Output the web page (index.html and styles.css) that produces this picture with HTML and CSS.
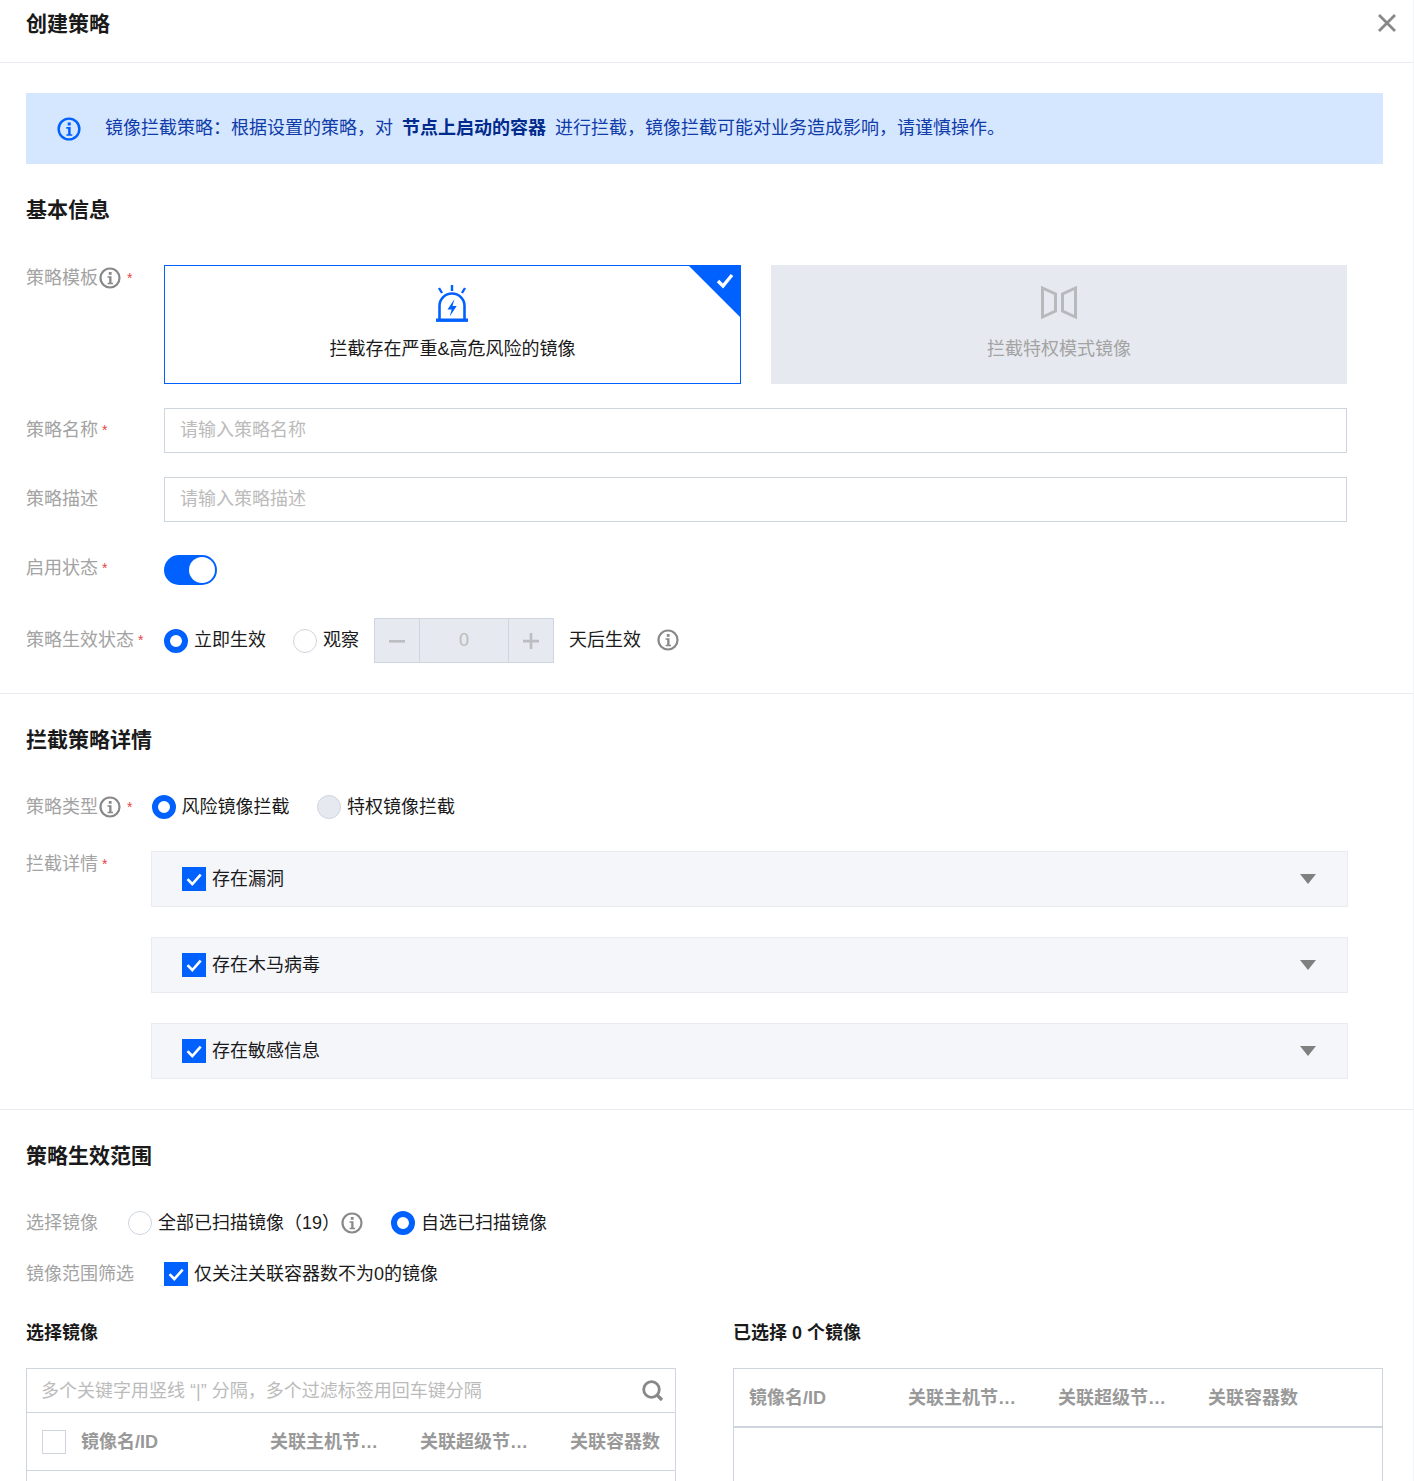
FILE: index.html
```html
<!DOCTYPE html>
<html lang="zh-CN">
<head>
<meta charset="utf-8">
<title>创建策略</title>
<link rel="stylesheet" href="styles.css">
</head>
<body>
<svg class="defs" width="0" height="0" aria-hidden="true">
  <symbol id="info" viewBox="0 0 22 22">
    <circle cx="11" cy="11" r="9.500" fill="none" stroke="currentColor" stroke-width="2.200"/>
    <rect x="9.800" y="5" width="2.800" height="2.800" fill="currentColor"/>
    <path d="M8.500 9.200h4v6.600h1.500v1.500H8.600v-1.500h1.600v-5.100H8.500z" fill="currentColor"/>
  </symbol>
  <symbol id="tick" viewBox="0 0 24 24">
    <path d="M5.500 12.200l4.800 4.800 8.400-9.400" fill="none" stroke="#fff" stroke-width="2.600"/>
  </symbol>
  <symbol id="caret" viewBox="0 0 16 10">
    <path d="M0 0h16L8 10z" fill="#808080"/>
  </symbol>
</svg>
<div class="page">
  <header class="head">
    <h1 class="head-title">创建策略</h1>
    <svg class="close" viewBox="0 0 20 20"><path d="M2 2l16 16M18 2L2 18" stroke="#888" stroke-width="2.800" fill="none"/></svg>
  </header>

  <section class="sec sec-one">
    <div class="alert">
      <svg class="alert-icon"><use href="#info"/></svg>
      <p class="alert-text">镜像拦截策略：根据设置的策略，对 <b class="alert-strong">节点上启动的容器</b> 进行拦截，镜像拦截可能对业务造成影响，请谨慎操作。</p>
    </div>
    <h2 class="sec-title t-basic">基本信息</h2>

    <div class="row row-tpl">
      <div class="label l138">策略模板<svg class="i-info"><use href="#info"/></svg><i class="req req-i">*</i></div>
      <div class="cards">
        <div class="card card-on">
          <svg class="card-icon" viewBox="0 0 34 38">
            <path d="M17 0v6M4 3l3 5M30 3l-3 5" stroke="#0061ff" stroke-width="2.400" fill="none"/>
            <path d="M4.500 34V21a12.500 12.500 0 0 1 25 0v13" stroke="#0061ff" stroke-width="2.600" fill="none"/>
            <path d="M1 33.500h32v3.400H1z" fill="#0061ff"/>
            <path d="M19.500 14l-7 10.500h4.200l-2 7 7-10.500h-4.200z" fill="#0061ff"/>
          </svg>
          <span class="card-text">拦截存在严重&amp;高危风险的镜像</span>
          <span class="corner"></span>
          <svg class="corner-tick" viewBox="0 0 18 16"><path d="M2 8l5 5 9-11" stroke="#fff" stroke-width="3.400" fill="none"/></svg>
        </div>
        <div class="card card-off">
          <svg class="card-icon" viewBox="0 0 36 34">
            <path d="M1.500 2.500l13 6v17l-13 6zM34.500 2.500l-13 6v17l13 6z" fill="none" stroke="#b7b9bd" stroke-width="3"/>
          </svg>
          <span class="card-text">拦截特权模式镜像</span>
        </div>
      </div>
    </div>

    <div class="row row-input">
      <div class="label l138">策略名称<i class="req">*</i></div>
      <input class="text-input" type="text" placeholder="请输入策略名称">
    </div>
    <div class="row row-input">
      <div class="label l138">策略描述</div>
      <input class="text-input" type="text" placeholder="请输入策略描述">
    </div>
    <div class="row row-switch">
      <div class="label l138">启用状态<i class="req">*</i></div>
      <span class="switch"><span class="knob"></span></span>
    </div>
    <div class="row row-effect">
      <div class="label l138">策略生效状态<i class="req">*</i></div>
      <span class="radio radio-on"></span><span class="opt">立即生效</span>
      <span class="radio radio-off gap-a"></span><span class="opt">观察</span>
      <div class="stepper">
        <span class="step step-l"><svg viewBox="0 0 16 16"><path d="M0 7h16v2.600H0z" fill="#bbbdc1"/></svg></span>
        <span class="step-val">0</span>
        <span class="step step-r"><svg viewBox="0 0 16 16"><path d="M0 6.800h16v2.600H0zM6.700 0h2.600v16H6.700z" fill="#bbbdc1"/></svg></span>
      </div>
      <span class="opt after-step">天后生效</span>
      <svg class="i-info i-info-b"><use href="#info"/></svg>
    </div>
  </section>

  <section class="sec sec-two">
    <h2 class="sec-title t-detail">拦截策略详情</h2>
    <div class="row row-type">
      <div class="label l126">策略类型<svg class="i-info"><use href="#info"/></svg><i class="req req-i">*</i></div>
      <span class="radio radio-on radio-tight"></span><span class="opt">风险镜像拦截</span>
      <span class="radio radio-dis gap-b"></span><span class="opt">特权镜像拦截</span>
    </div>
    <div class="row row-panels">
      <div class="label l125">拦截详情<i class="req">*</i></div>
      <div class="panels">
        <div class="panel"><span class="check"><svg><use href="#tick"/></svg></span><span class="opt">存在漏洞</span><svg class="caret"><use href="#caret"/></svg></div>
        <div class="panel"><span class="check"><svg><use href="#tick"/></svg></span><span class="opt">存在木马病毒</span><svg class="caret"><use href="#caret"/></svg></div>
        <div class="panel"><span class="check"><svg><use href="#tick"/></svg></span><span class="opt">存在敏感信息</span><svg class="caret"><use href="#caret"/></svg></div>
      </div>
    </div>
  </section>

  <section class="sec sec-three">
    <h2 class="sec-title t-scope">策略生效范围</h2>
    <div class="row row-pick">
      <div class="label l102">选择镜像</div>
      <span class="radio radio-off"></span><span class="opt">全部已扫描镜像（19）</span>
      <svg class="i-info i-info-c"><use href="#info"/></svg>
      <span class="radio radio-on gap-c"></span><span class="opt">自选已扫描镜像</span>
    </div>
    <div class="row row-filter">
      <div class="label l138">镜像范围筛选</div>
      <span class="check"><svg><use href="#tick"/></svg></span><span class="opt">仅关注关联容器数不为0的镜像</span>
    </div>
    <div class="transfer">
      <div class="pane">
        <h3 class="pane-title">选择镜像</h3>
        <div class="box">
          <div class="search">
            <span class="search-ph">多个关键字用竖线 “|” 分隔，多个过滤标签用回车键分隔</span>
            <svg class="search-icon" viewBox="0 0 22 22"><circle cx="9.500" cy="9.500" r="7.800" fill="none" stroke="#888" stroke-width="2.800"/><path d="M14.500 14.500l5.500 5.500" stroke="#888" stroke-width="3.200"/></svg>
          </div>
          <div class="thead thead-l">
            <span class="cell cell-name"><span class="box-check"></span>镜像名/ID</span>
            <span class="cell">关联主机节点数</span>
            <span class="cell">关联超级节点数</span>
            <span class="cell">关联容器数</span>
          </div>
          <div class="tbody"></div>
        </div>
      </div>
      <div class="pane">
        <h3 class="pane-title">已选择 0 个镜像</h3>
        <div class="box">
          <div class="thead thead-r">
            <span class="cell">镜像名/ID</span>
            <span class="cell">关联主机节点数</span>
            <span class="cell">关联超级节点数</span>
            <span class="cell">关联容器数</span>
          </div>
          <div class="tbody"></div>
        </div>
      </div>
    </div>
  </section>
</div>
</body>
</html>
```

FILE: styles.css
```css
* { box-sizing: border-box; }
html, body { margin: 0; padding: 0; }
body {
  height: 1481px;
  overflow: hidden;
  background: #fff;
  color: #1a1a1a;
  font-family: "Liberation Sans", "Noto Sans CJK SC", sans-serif;
  font-size: 18px;
  line-height: 26px;
}
.defs { position: absolute; }
.page { width: 1414px; border-right: 1px solid #f3f4f7; height: 1481px; overflow: hidden; }

.head { height: 63px; border-bottom: 1px solid #e9ebf1; padding: 0 16px 0 26px; display: flex; justify-content: space-between; align-items: flex-start; }
.head-title { margin: 9px 0 0; font-size: 21px; line-height: 30px; font-weight: 700; }
.close { width: 20px; height: 20px; margin-top: 13px; }

.sec { padding: 0 26px; }
.sec-one { padding-top: 30px; height: 631px; border-bottom: 1px solid #e9ebf1; }
.sec-two { height: 416px; border-bottom: 1px solid #e9ebf1; }
.alert { height: 71px; width: 1357px; background: #d5e6ff; display: flex; align-items: center; padding-left: 31px; color: #0f3ca8; }
.alert-icon { width: 24px; height: 24px; color: #0061ff; margin-right: 24px; flex: none; }
.alert-text { margin: 0 0 2px; }
.alert-strong { color: #002a8c; margin: 0 4px; }

.sec-title { margin: 0; font-size: 21px; line-height: 30px; font-weight: 700; }
.t-basic { margin-top: 31px; margin-bottom: 40px; }
.t-detail { padding-top: 31px; margin-bottom: 39px; }
.t-scope { padding-top: 31px; margin-bottom: 39px; }

.row { display: flex; align-items: center; }
.label { color: #a3a3a3; flex: none; display: flex; align-items: center; height: 26px; }
.l138 { width: 138px; }
.l126 { width: 126px; }
.l125 { width: 125px; }
.l102 { width: 102px; }
.req { color: #e54545; font-style: normal; font-size: 14px; margin-left: 4px; line-height: 14px; }
.req-i { margin-left: 6px; }
.i-info { width: 22px; height: 22px; color: #888; flex: none; margin-left: 1px; }
.i-info-b { margin-left: 16px; }
.i-info-c { margin-left: 1px; }
.opt { white-space: nowrap; color: #1a1a1a; }

.row-tpl { align-items: flex-start; height: 119px; }
.cards { display: flex; gap: 30px; }
.card { position: relative; height: 119px; display: flex; flex-direction: column; align-items: center; overflow: hidden; }
.card-on { width: 577px; border: 1px solid #0061ff; background: #fff; }
.card-off { width: 576px; background: #e6e9ef; color: #a3a3a3; }
.card-icon { position: absolute; left: 50%; top: 19px; width: 34px; height: 38px; margin-left: -18px; }
.card-off .card-icon { top: 20px; width: 36px; height: 35px; margin-left: -18px; }
.card-text { margin-top: 70px; white-space: nowrap; }
.card-off .card-text { margin-top: 71px; }
.corner { position: absolute; right: -1px; top: -1px; width: 0; height: 0; border-style: solid; border-width: 0 53px 53px 0; border-color: transparent #0061ff transparent transparent; }
.corner-tick { position: absolute; right: 6px; top: 7px; width: 18px; height: 16px; }

.row-input { margin-top: 24px; height: 45px; }
.row-input .label { margin-bottom: 2px; }
.text-input { width: 1183px; height: 45px; border: 1px solid #cfd5de; padding: 0 15px; font: inherit; color: #1a1a1a; outline: none; background: #fff; }
.text-input::placeholder { color: #bbb; opacity: 1; }

.row-switch { margin-top: 33px; height: 30px; }
.row-switch .label { margin-top: -4px; }
.switch { width: 53px; height: 30px; border-radius: 15px; background: #0061ff; position: relative; display: block; }
.knob { position: absolute; right: 2px; top: 2px; width: 26px; height: 26px; background: #fff; border-radius: 50%; }

.row-effect { margin-top: 33px; height: 45px; }
.row-effect .label, .row-effect .opt { margin-bottom: 2px; }
.row-effect .i-info-b { margin-bottom: 2px; }
.radio { width: 24px; height: 24px; border-radius: 50%; flex: none; margin-right: 6px; display: block; }
.radio-on { border: 6px solid #0061ff; background: #fff; }
.radio-off { border: 1px solid #cfd5de; background: #fff; }
.radio-dis { border: 1px solid #cfd5de; background: #e6e9ef; }
.radio-tight { margin-right: 5.5px; }
.gap-a { margin-left: 27px; }
.gap-b { margin-left: 27.5px; }
.gap-c { margin-left: 28px; }

.stepper { margin-left: 15px; width: 180px; height: 45px; border: 1px solid #cfd5de; background: #e6e9ef; display: flex; align-items: stretch; }
.step { width: 45px; flex: none; display: flex; align-items: center; justify-content: center; }
.step svg { width: 16px; height: 16px; }
.step-l { border-right: 1px solid #cfd5de; }
.step-r { border-left: 1px solid #cfd5de; }
.step-val { flex: 1; text-align: center; color: #bbb; line-height: 43px; }
.after-step { margin-left: 15px; }

.row-type { height: 26px; margin-bottom: 31px; }
.row-panels { align-items: flex-start; }
.panels { display: flex; flex-direction: column; gap: 30px; }
.panel { width: 1197px; height: 56px; background: #f4f6fa; border: 1px solid #e9ebf1; display: flex; align-items: center; padding-left: 30px; position: relative; }
.check { width: 24px; height: 24px; background: #0061ff; flex: none; margin-right: 6px; display: block; }
.check svg { width: 24px; height: 24px; display: block; }
.caret { position: absolute; right: 31px; top: 22px; width: 16px; height: 10px; }

.row-pick { height: 26px; margin-bottom: 25px; }
.row-filter { height: 26px; margin-bottom: 33px; }

.transfer { display: flex; gap: 57px; }
.pane { width: 650px; flex: none; }
.pane-title { margin: 0 0 22px; font-size: 18px; line-height: 26px; font-weight: 700; }
.box { border: 1px solid #cfd5de; height: 200px; }
.search { height: 44px; border-bottom: 1px solid #cfd5de; padding: 0 11px 0 14px; display: flex; align-items: center; justify-content: space-between; }
.search-ph { color: #bbb; white-space: nowrap; }
.search-icon { width: 22px; height: 22px; }
.thead { display: grid; align-items: center; color: #999; font-weight: 700; }
.thead-l { height: 58px; border-bottom: 1px solid #cfd5de; grid-template-columns: 228px 150px 150px 1fr; padding-left: 15px; }
.thead-r { height: 59px; border-bottom: 2px solid #cfd5de; grid-template-columns: 159px 150px 150px 1fr; padding-left: 15px; }
.cell { display: block; width: 110px; white-space: nowrap; overflow: hidden; text-overflow: ellipsis; }
.cell-name { display: flex; align-items: center; width: auto; }
.box-check { width: 24px; height: 24px; border: 1px solid #cfd5de; background: #fff; margin-right: 15px; flex: none; }
```
